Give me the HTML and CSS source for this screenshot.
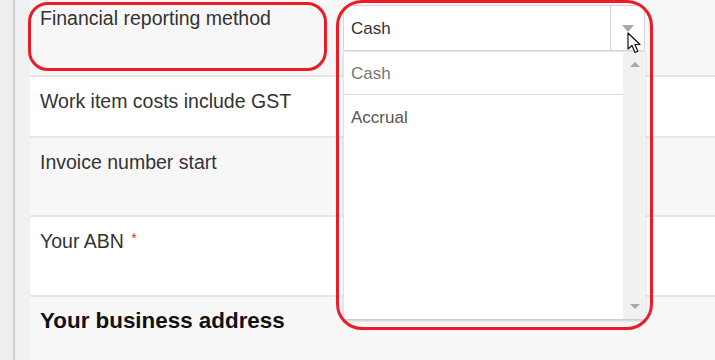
FILE: index.html
```html
<!DOCTYPE html>
<html lang="en">
<head>
<meta charset="utf-8">
<title>Settings</title>
<link rel="stylesheet" href="styles.css">
</head>
<body>
<div class="page">
  <div class="gutter"></div>
  <div class="form">
    <div class="row row-first alt">
      <div class="label">Financial reporting method</div>
      <div class="value">
        <div class="select">
          <div class="select-text">Cash</div>
          <div class="select-btn"><span class="tri-down"></span></div>
          <div class="listbox">
            <div class="options">
              <div class="option selected">Cash</div>
              <div class="option">Accrual</div>
            </div>
            <div class="scrollbar">
              <span class="tri-up small"></span>
              <span class="tri-down small"></span>
            </div>
          </div>
        </div>
      </div>
    </div>
    <div class="row row-short">
      <div class="label">Work item costs include GST</div>
    </div>
    <div class="row row-tall alt">
      <div class="label">Invoice number start</div>
    </div>
    <div class="row row-tall">
      <div class="label">Your ABN <span class="req">*</span></div>
    </div>
    <div class="row row-last alt">
      <div class="heading">Your business address</div>
    </div>
  </div>
  <div class="ring ring-label"></div>
  <div class="ring ring-select"></div>
  <svg class="cursor" width="16" height="22" viewBox="0 0 16 22">
    <path d="M1 1 L1 17 L5 13.5 L8 20.5 L10.8 19.3 L7.9 12.5 L13 12.5 Z" fill="#fff" stroke="#111" stroke-width="1.2" stroke-linejoin="round"/>
  </svg>
</div>
</body>
</html>
```
FILE: styles.css
```css
* { box-sizing: border-box; }
html, body { margin: 0; padding: 0; }
body {
  background: #f7f7f8;
  font-family: "Liberation Sans", Arial, sans-serif;
  color: #333;
  width: 715px;
  height: 360px;
  overflow: hidden;
}
.page {
  position: relative;
  display: flex;
  height: 360px;
}
.gutter {
  width: 30px;
  flex: none;
  background: #f1f1f2;
  border-left: 13px solid #eeeef0;
  position: relative;
}
.gutter::before {
  content: "";
  position: absolute;
  left: 0;
  top: 0;
  bottom: 0;
  width: 2px;
  background: #cfcfd2;
}
.form {
  flex: 1;
  display: flex;
  flex-direction: column;
}
.row {
  display: flex;
  background: #fff;
  border-bottom: 2px solid #e6e6e8;
  padding-top: 12px;
}
.row.alt { background: #f7f7f8; }
.row-first { height: 77px; padding-top: 0; }
.row-short { height: 61px; }
.row-tall { height: 79px; }
.row-tall + .row-tall { height: 80px; }
.row-last { flex: 1; border-bottom: 0; }
.label {
  width: 313px;
  flex: none;
  padding-left: 10px;
  font-size: 19.5px;
  line-height: 24px;
  color: #333;
}
.row-first .label { padding-top: 6px; }
.req {
  color: #e03030;
  font-size: 14px;
  vertical-align: top;
  line-height: 18px;
  margin-left: 2px;
}
.heading {
  padding-left: 10px;
  font-size: 22.4px;
  line-height: 24px;
  font-weight: bold;
  color: #111;
}
.value { flex: 1; padding-top: 5px; }
.select {
  position: relative;
  width: 302px;
  height: 46px;
  display: flex;
  background: #fff;
  border: 1px solid #d4d4d6;
  border-radius: 4px 4px 0 0;
}
.select-text {
  flex: 1;
  padding-left: 7px;
  padding-top: 1px;
  font-size: 17px;
  line-height: 44px;
  color: #333;
}
.select-btn {
  width: 34px;
  border-left: 1px solid #d8d8da;
  display: flex;
  justify-content: center;
  padding-top: 19px;
}
.tri-down {
  width: 0; height: 0;
  border-left: 6px solid transparent;
  border-right: 6px solid transparent;
  border-top: 7px solid #a8a8aa;
}
.tri-up {
  width: 0; height: 0;
  border-left: 6px solid transparent;
  border-right: 6px solid transparent;
  border-bottom: 6px solid #a8a8aa;
}
.small.tri-down { border-left-width: 5px; border-right-width: 5px; border-top-width: 5px; }
.small.tri-up { border-left-width: 5px; border-right-width: 5px; border-bottom-width: 5px; }
.listbox {
  position: absolute;
  left: -1px;
  top: 45px;
  width: 303px;
  height: 268px;
  background: #fff;
  display: flex;
  border-left: 1px solid #e2e2e4;
  border-top: 1px solid #e6e6e8;
  box-shadow: 0 2px 2px rgba(0,0,0,0.18);
}
.options { flex: 1; }
.option {
  height: 42px;
  padding-left: 7px;
  padding-top: 2px;
  font-size: 17px;
  line-height: 42px;
  color: #555;
}
.option.selected {
  height: 43px;
  padding-top: 1px;
  color: #777;
  border-bottom: 1px solid #dcdcde;
}
.scrollbar {
  width: 23px;
  background: #f1f1f2;
  display: flex;
  flex-direction: column;
  align-items: center;
  justify-content: space-between;
  padding: 10px 0 10px 0;
}
.ring {
  position: absolute;
  border: 3.5px solid #ec1c27;
}
.ring-label {
  left: 28px;
  top: 2px;
  width: 299px;
  height: 69px;
  border-radius: 20px;
}
.ring-select {
  left: 336px;
  top: 0;
  width: 317px;
  height: 330px;
  border-radius: 26px;
}
.cursor {
  position: absolute;
  left: 627px;
  top: 32px;
}
```
